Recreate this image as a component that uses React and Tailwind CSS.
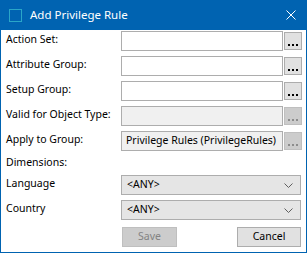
function Field({ label, value = '', disabled = false }) {
  return (
    <div className="flex h-5 items-center">
      <span className="w-[115px] shrink-0 whitespace-nowrap pb-0.5">{label}</span>
      <div
        className={`h-5 w-[162px] shrink-0 overflow-hidden whitespace-nowrap border border-[#adadad] pl-1 leading-[17px] ${
          disabled ? 'bg-[#f0f0f0]' : 'bg-white'
        }`}
      >
        {value}
      </div>
      <div
        className={`ml-px flex h-[18px] w-[18px] shrink-0 items-end justify-center border pb-[3px] ${
          disabled ? 'border-[#bfbfbf] bg-[#cccccc]' : 'border-[#adadad] bg-[#e1e1e1]'
        }`}
      >
        <div className="flex gap-[2px]">
          {[0, 1, 2].map((i) => (
            <span
              key={i}
              className={`block h-[2px] w-[2px] ${disabled ? 'bg-[#8c8c8c]' : 'bg-black'}`}
            />
          ))}
        </div>
      </div>
    </div>
  );
}

function Select({ label }) {
  return (
    <div className="flex h-5 items-center">
      <span className="w-[115px] shrink-0 whitespace-nowrap pb-0.5">{label}</span>
      <div className="flex h-5 w-[180px] shrink-0 items-center justify-between border border-[#adadad] bg-[#e5e5e5] pl-[5px] pr-[7px]">
        <span className="pb-px">&lt;ANY&gt;</span>
        <svg width="9" height="5" viewBox="0 0 9 5">
          <path d="M0.5 0.5 L4.5 4.5 L8.5 0.5" fill="none" stroke="#5f5f5f" strokeWidth="1" />
        </svg>
      </div>
    </div>
  );
}

export default function App() {
  return (
    <div
      className="h-[253px] w-[307px] border border-t-0 border-[#0063b1] bg-white text-[10.5px] text-black"
      style={{ fontFamily: '"Noto Sans", "Open Sans", sans-serif' }}
    >
      <div className="flex h-[30px] items-center bg-[#0063b1] text-white">
        <div className="ml-2 h-[13px] w-[13px] border border-[#2aa6c8]" />
        <span className="ml-2 pb-px text-[11.5px]">Add Privilege Rule</span>
        <svg className="ml-auto mr-[10px]" width="10" height="10" viewBox="0 0 10 10">
          <path d="M0.5 0.5 L9.5 9.5 M9.5 0.5 L0.5 9.5" stroke="white" strokeWidth="1" />
        </svg>
      </div>

      <div className="flex flex-col pl-[5px] pt-px">
        <div className="flex flex-col gap-[5px]">
          <Field label="Action Set:" />
          <Field label="Attribute Group:" />
          <Field label="Setup Group:" />
          <Field label="Valid for Object Type:" disabled />
          <Field label="Apply to Group:" value="Privilege Rules (PrivilegeRules)" disabled />
        </div>
        <div className="mt-[2px] flex h-5 items-center">Dimensions:</div>
        <div className="mt-[2px] flex flex-col gap-[5px]">
          <Select label="Language" />
          <Select label="Country" />
        </div>
        <div className="mt-[7px] flex h-5 pl-[116px]">
          <div className="flex h-5 w-[55px] items-center justify-center border border-[#bfbfbf] bg-[#cccccc] pb-px text-[#838383]">
            Save
          </div>
          <div className="ml-auto mr-[5px] flex h-5 w-[64px] items-center justify-center border border-[#adadad] bg-[#e1e1e1] pb-px">
            Cancel
          </div>
        </div>
      </div>
    </div>
  );
}
